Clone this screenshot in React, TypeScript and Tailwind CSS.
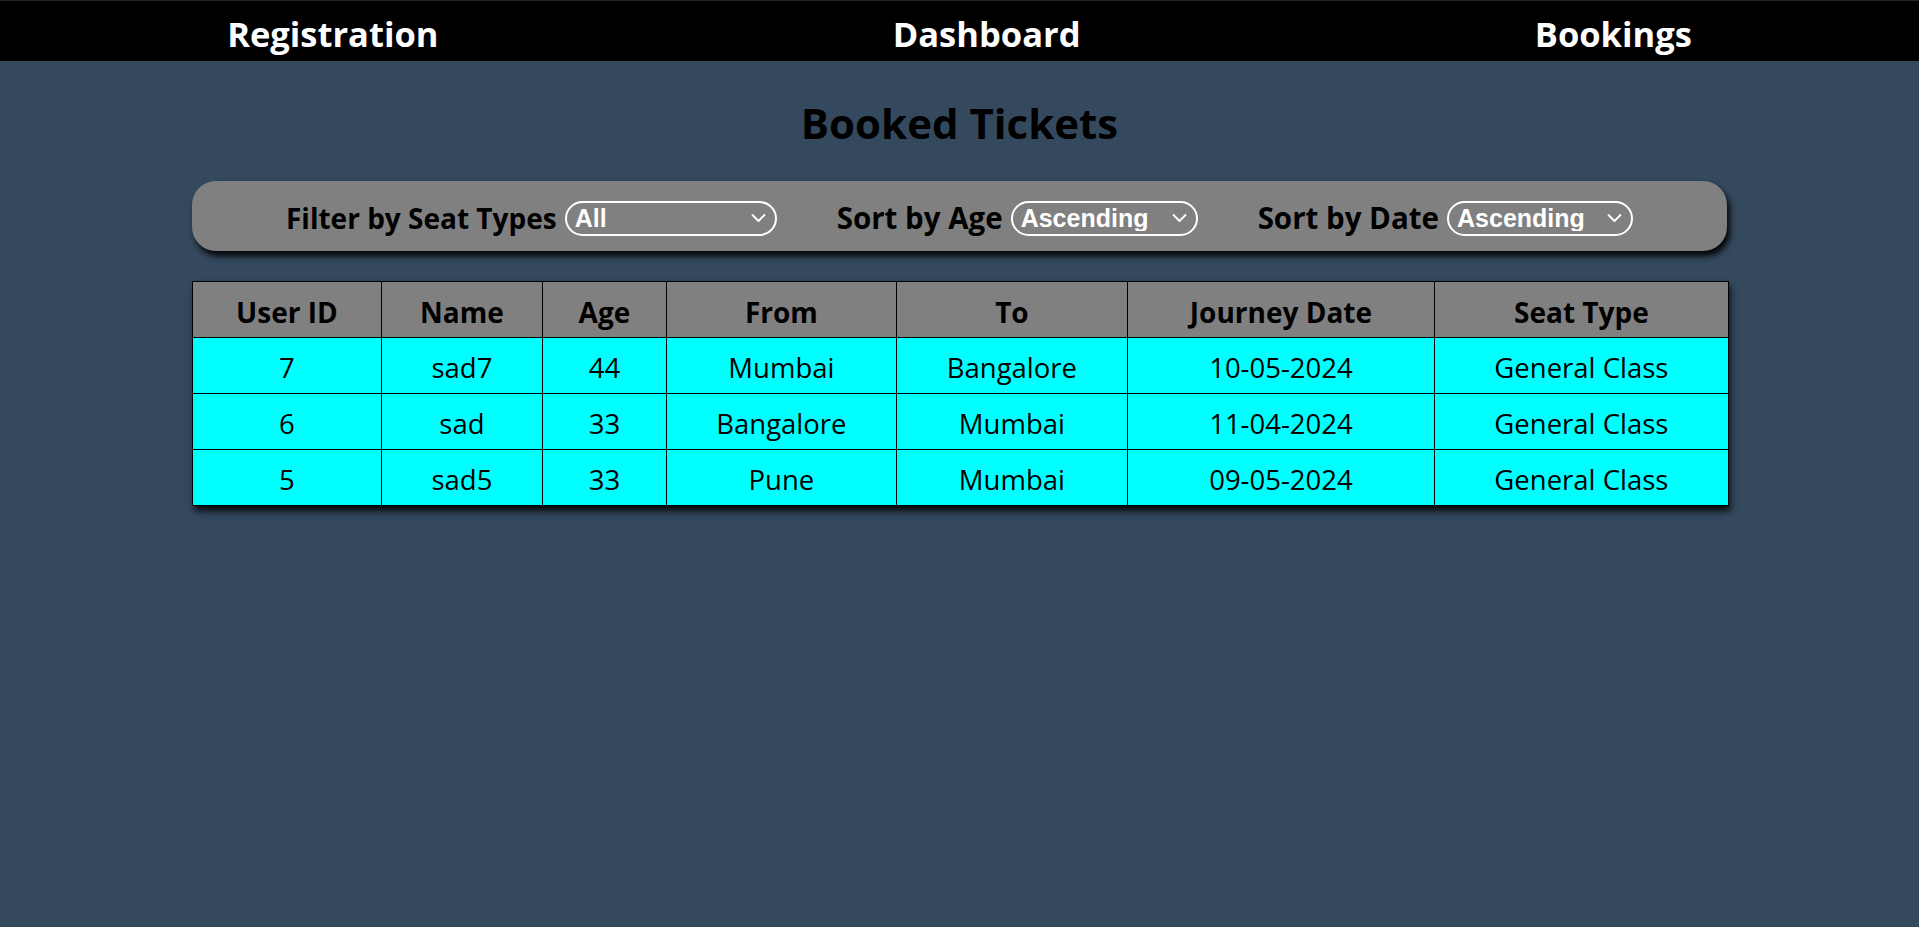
import React from "react";

const rows = [
  { id: 7, name: "sad7", age: 44, from: "Mumbai", to: "Bangalore", date: "10-05-2024", seat: "General Class" },
  { id: 6, name: "sad", age: 33, from: "Bangalore", to: "Mumbai", date: "11-04-2024", seat: "General Class" },
  { id: 5, name: "sad5", age: 33, from: "Pune", to: "Mumbai", date: "09-05-2024", seat: "General Class" },
];

const headers = ["User ID", "Name", "Age", "From", "To", "Journey Date", "Seat Type"];
const widths = [189, 161, 124, 230, 231, 307, 294];

function Chevron() {
  return (
    <svg
      className="pointer-events-none absolute right-[11px] top-1/2 -translate-y-1/2"
      width="15"
      height="9"
      viewBox="0 0 15 9"
      fill="none"
    >
      <path d="M1.5 1.5 L7.5 7.5 L13.5 1.5" stroke="white" strokeWidth="1.8" strokeLinecap="round" strokeLinejoin="round" />
    </svg>
  );
}

function Select({ options, width }: { options: string[]; width: string }) {
  return (
    <div className={`relative inline-block ${width}`}>
      <select
        className="h-[35px] w-full appearance-none rounded-full border-2 border-white bg-transparent pl-[8px] pr-[34px] text-[25px] font-bold leading-none text-white outline-none"
        style={{ fontFamily: '"Liberation Sans", Arial, sans-serif' }}
        defaultValue={options[0]}
      >
        {options.map((o) => (
          <option key={o} value={o} className="text-black">
            {o}
          </option>
        ))}
      </select>
      <Chevron />
    </div>
  );
}

export default function App() {
  return (
    <div
      className="min-h-[927px] w-full bg-[#34495e]"
      style={{ fontFamily: '"Open Sans", "Noto Sans", sans-serif' }}
    >
      <div className="h-px w-full bg-[#202428]" />
      <nav className="flex h-[60px] items-center justify-around bg-black pt-[6px]">
        <a className="text-[34.5px] font-bold text-white">Registration</a>
        <a className="text-[34.5px] font-bold text-white">Dashboard</a>
        <a className="text-[34.5px] font-bold text-white">Bookings</a>
      </nav>
      <h1 className="mt-[32px] text-center text-[42px] font-bold leading-[60px] text-black">Booked Tickets</h1>
      <div className="mx-auto mt-[28px] flex h-[70px] w-[80%] items-center justify-center gap-[60px] rounded-[24px] bg-[#808080] pt-[4px] shadow-[3px_5px_6px_rgba(0,0,0,0.95)]">
        <div className="flex items-center gap-2">
          <span className="text-[28px] font-bold text-black">Filter by Seat Types</span>
          <Select options={["All", "General Class", "AC Class", "Sleeper Class"]} width="w-[212px]" />
        </div>
        <div className="flex items-center gap-2">
          <span className="text-[29.5px] font-bold text-black">Sort by Age</span>
          <Select options={["Ascending", "Descending"]} width="w-[187px]" />
        </div>
        <div className="flex items-center gap-2">
          <span className="text-[29.5px] font-bold text-black">Sort by Date</span>
          <Select options={["Ascending", "Descending"]} width="w-[186px]" />
        </div>
      </div>
      <div className="mx-auto mt-[30px] w-[80%] shadow-[3px_5px_7px_rgba(0,0,0,0.9)]">
        <table className="w-full table-fixed border-collapse border border-black">
          <colgroup>
            {widths.map((w, i) => (
              <col key={i} style={{ width: w }} />
            ))}
          </colgroup>
          <thead>
            <tr className="h-[56px] bg-[#808080]">
              {headers.map((h) => (
                <th key={h} className="border border-black pt-[4px] text-center text-[28px] font-bold leading-[38px] text-black">
                  {h}
                </th>
              ))}
            </tr>
          </thead>
          <tbody>
            {rows.map((r) => (
              <tr key={r.id} className="h-[56px] bg-[#00ffff]">
                {[r.id, r.name, r.age, r.from, r.to, r.date, r.seat].map((v, i) => (
                  <td key={i} className="border border-black pt-[4px] text-center text-[27.5px] font-normal leading-[38px] text-black">
                    {v}
                  </td>
                ))}
              </tr>
            ))}
          </tbody>
        </table>
      </div>
    </div>
  );
}
